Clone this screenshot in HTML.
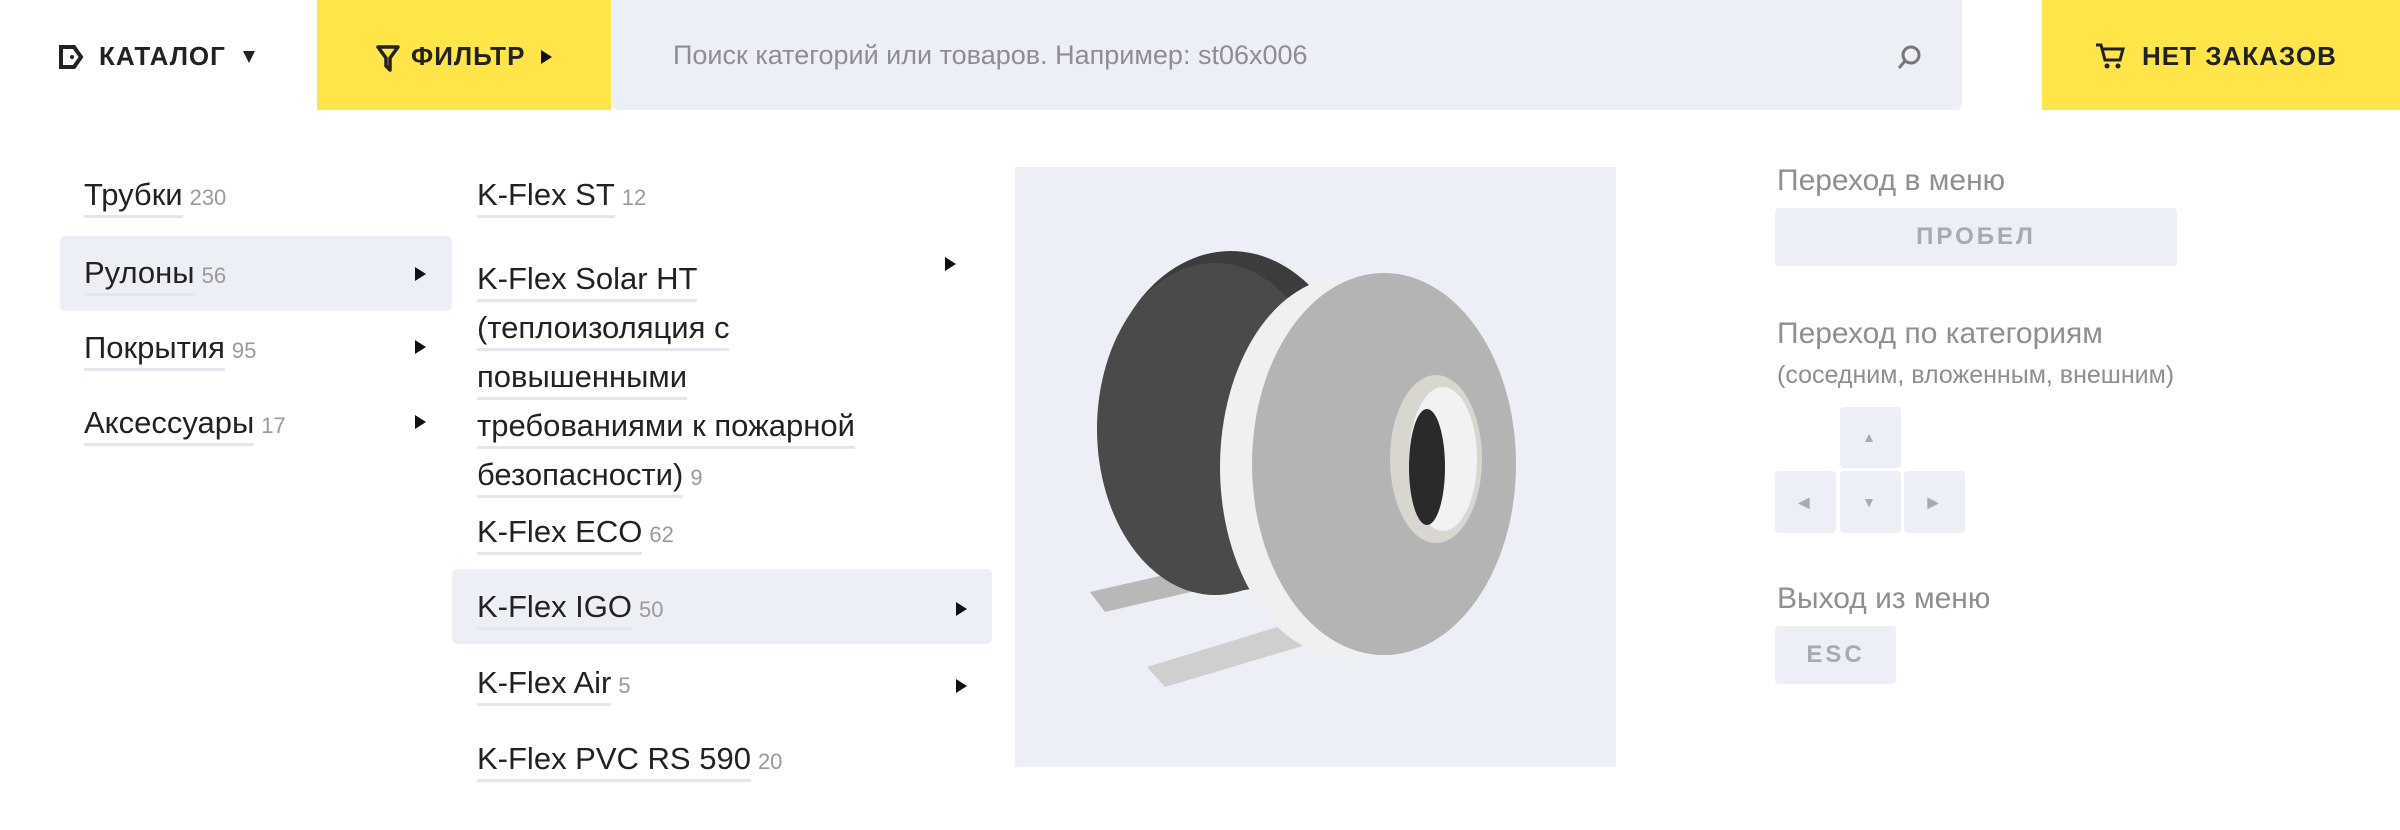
<!DOCTYPE html>
<html><head><meta charset="utf-8"><style>
*{margin:0;padding:0;box-sizing:border-box}
body{width:2400px;height:830px;background:#fff;font-family:"Liberation Sans",sans-serif;position:relative;overflow:hidden;color:#1e1e1e}
.a{position:absolute}
.hdr{font-weight:bold;font-size:26px;letter-spacing:1px;color:#222;top:41px}
.it{position:absolute;font-size:31px;color:#222;white-space:nowrap}
.it u{text-decoration:none;border-bottom:3px solid #e4e6ec;padding-bottom:3px}
.it small{font-size:22px;color:#9a9a9a;margin-left:7px}
.tri{position:absolute;width:0;height:0;border-left:11px solid #111;border-top:7px solid transparent;border-bottom:7px solid transparent}
.gray{color:#8e8e93;font-size:30px}
.key{position:absolute;background:#eceff6;border-radius:4px;color:#a6a9b6;font-size:24px;letter-spacing:3px;text-align:center;font-weight:bold}
</style></head><body>
<svg class="a" style="left:58px;top:44px" width="26" height="26" viewBox="0 0 26 26"><path d="M3 3H16L23 13L16 23H3Z" fill="none" stroke="#222" stroke-width="4"/><circle cx="14" cy="13" r="2" fill="#222"/></svg>
<div class="a hdr" style="left:99px">КАТАЛОГ</div>
<div class="a" style="left:243px;top:51px;border-top:12px solid #222;border-left:6px solid transparent;border-right:6px solid transparent"></div>
<div class="a" style="left:317px;top:0;width:294px;height:110px;background:#ffe54a"></div>
<svg class="a" style="left:376px;top:44px" width="24" height="28" viewBox="0 0 24 28"><path d="M2 3H22L14 14V26L10 22V14Z" fill="none" stroke="#222" stroke-width="3.5" stroke-linejoin="round"/></svg>
<div class="a hdr" style="left:411px">ФИЛЬТР</div>
<div class="tri" style="left:541px;top:50px"></div>
<div class="a" style="left:612px;top:0;width:1350px;height:110px;background:#eceff6;border-radius:0 0 6px 6px"></div>
<div class="a" style="left:673px;top:40px;font-size:27px;color:#8d8e94">Поиск категорий или товаров. Например: st06x006</div>
<svg class="a" style="left:1895px;top:44px" width="28" height="28" viewBox="0 0 28 28"><circle cx="16" cy="11" r="8" fill="none" stroke="#777" stroke-width="3"/><path d="M10 17L4 24" stroke="#777" stroke-width="3"/></svg>
<div class="a" style="left:2042px;top:0;width:358px;height:110px;background:#ffe54a"></div>
<svg class="a" style="left:2095px;top:42px" width="30" height="28" viewBox="0 0 30 28"><path d="M1 3H6L10 18H25L28 7H8" fill="none" stroke="#222" stroke-width="3"/><circle cx="12" cy="24" r="2.5" fill="#222"/><circle cx="23" cy="24" r="2.5" fill="#222"/></svg>
<div class="a hdr" style="left:2142px">НЕТ ЗАКАЗОВ</div>
<div class="a" style="left:60px;top:236px;width:392px;height:75px;background:#eceff6;border-radius:5px"></div>
<div class="it" style="left:84px;top:177px"><u>Трубки</u><small>230</small></div>
<div class="it" style="left:84px;top:255px"><u>Рулоны</u><small>56</small></div>
<div class="it" style="left:84px;top:330px"><u>Покрытия</u><small>95</small></div>
<div class="it" style="left:84px;top:405px"><u>Аксессуары</u><small>17</small></div>
<div class="tri" style="left:415px;top:267px"></div>
<div class="tri" style="left:415px;top:340px"></div>
<div class="tri" style="left:415px;top:415px"></div>
<div class="a" style="left:452px;top:569px;width:540px;height:75px;background:#eceff6;border-radius:5px"></div>
<div class="it" style="left:477px;top:177px"><u>K-Flex ST</u><small>12</small></div>
<div class="it" style="left:477px;top:254px;line-height:49px;white-space:normal;width:460px"><u>K-Flex Solar HT</u><br><u>(теплоизоляция с</u><br><u>повышенными</u><br><u>требованиями к пожарной</u><br><u>безопасности)</u><small>9</small></div>
<div class="it" style="left:477px;top:514px"><u>K-Flex ECO</u><small>62</small></div>
<div class="it" style="left:477px;top:589px"><u>K-Flex IGO</u><small>50</small></div>
<div class="it" style="left:477px;top:665px"><u>K-Flex Air</u><small>5</small></div>
<div class="it" style="left:477px;top:741px"><u>K-Flex PVC RS 590</u><small>20</small></div>
<div class="tri" style="left:945px;top:257px"></div>
<div class="tri" style="left:956px;top:602px"></div>
<div class="tri" style="left:956px;top:679px"></div>
<svg class="a" style="left:1015px;top:167px" width="601" height="600" viewBox="0 0 601 600">
<rect width="601" height="600" fill="#eceff6"/>
<polygon points="75,425 250,385 262,405 90,445" fill="#b8b8b8"/>
<polygon points="132,500 360,430 385,450 150,520" fill="#cfcfcf"/>
<ellipse cx="216" cy="254" rx="130" ry="170" fill="#3c3c3c"/>
<ellipse cx="200" cy="262" rx="118" ry="166" fill="#4a4a4a"/>
<ellipse cx="330" cy="300" rx="125" ry="190" fill="#f0f0f0"/>
<ellipse cx="369" cy="297" rx="132" ry="191" fill="#b4b4b4"/>
<ellipse cx="421" cy="292" rx="46" ry="84" fill="#d9d6d0"/>
<ellipse cx="428" cy="292" rx="34" ry="72" fill="#f2f2f2"/>
<ellipse cx="412" cy="300" rx="18" ry="58" fill="#2a2a2a"/>
</svg>
<div class="a gray" style="left:1777px;top:164px">Переход в меню</div>
<div class="key" style="left:1775px;top:208px;width:402px;height:58px;line-height:58px">ПРОБЕЛ</div>
<div class="a gray" style="left:1777px;top:317px">Переход по категориям</div>
<div class="a gray" style="left:1777px;top:361px;font-size:25px">(соседним, вложенным, внешним)</div>
<div class="key" style="left:1840px;top:407px;width:61px;height:61px;line-height:61px;font-size:14px">▲</div>
<div class="key" style="left:1775px;top:471px;width:61px;height:62px;line-height:62px;font-size:14px">◀</div>
<div class="key" style="left:1840px;top:471px;width:61px;height:62px;line-height:62px;font-size:14px">▼</div>
<div class="key" style="left:1904px;top:471px;width:61px;height:62px;line-height:62px;font-size:14px">▶</div>
<div class="a gray" style="left:1777px;top:582px">Выход из меню</div>
<div class="key" style="left:1775px;top:626px;width:121px;height:58px;line-height:58px">ESC</div>
</body></html>
